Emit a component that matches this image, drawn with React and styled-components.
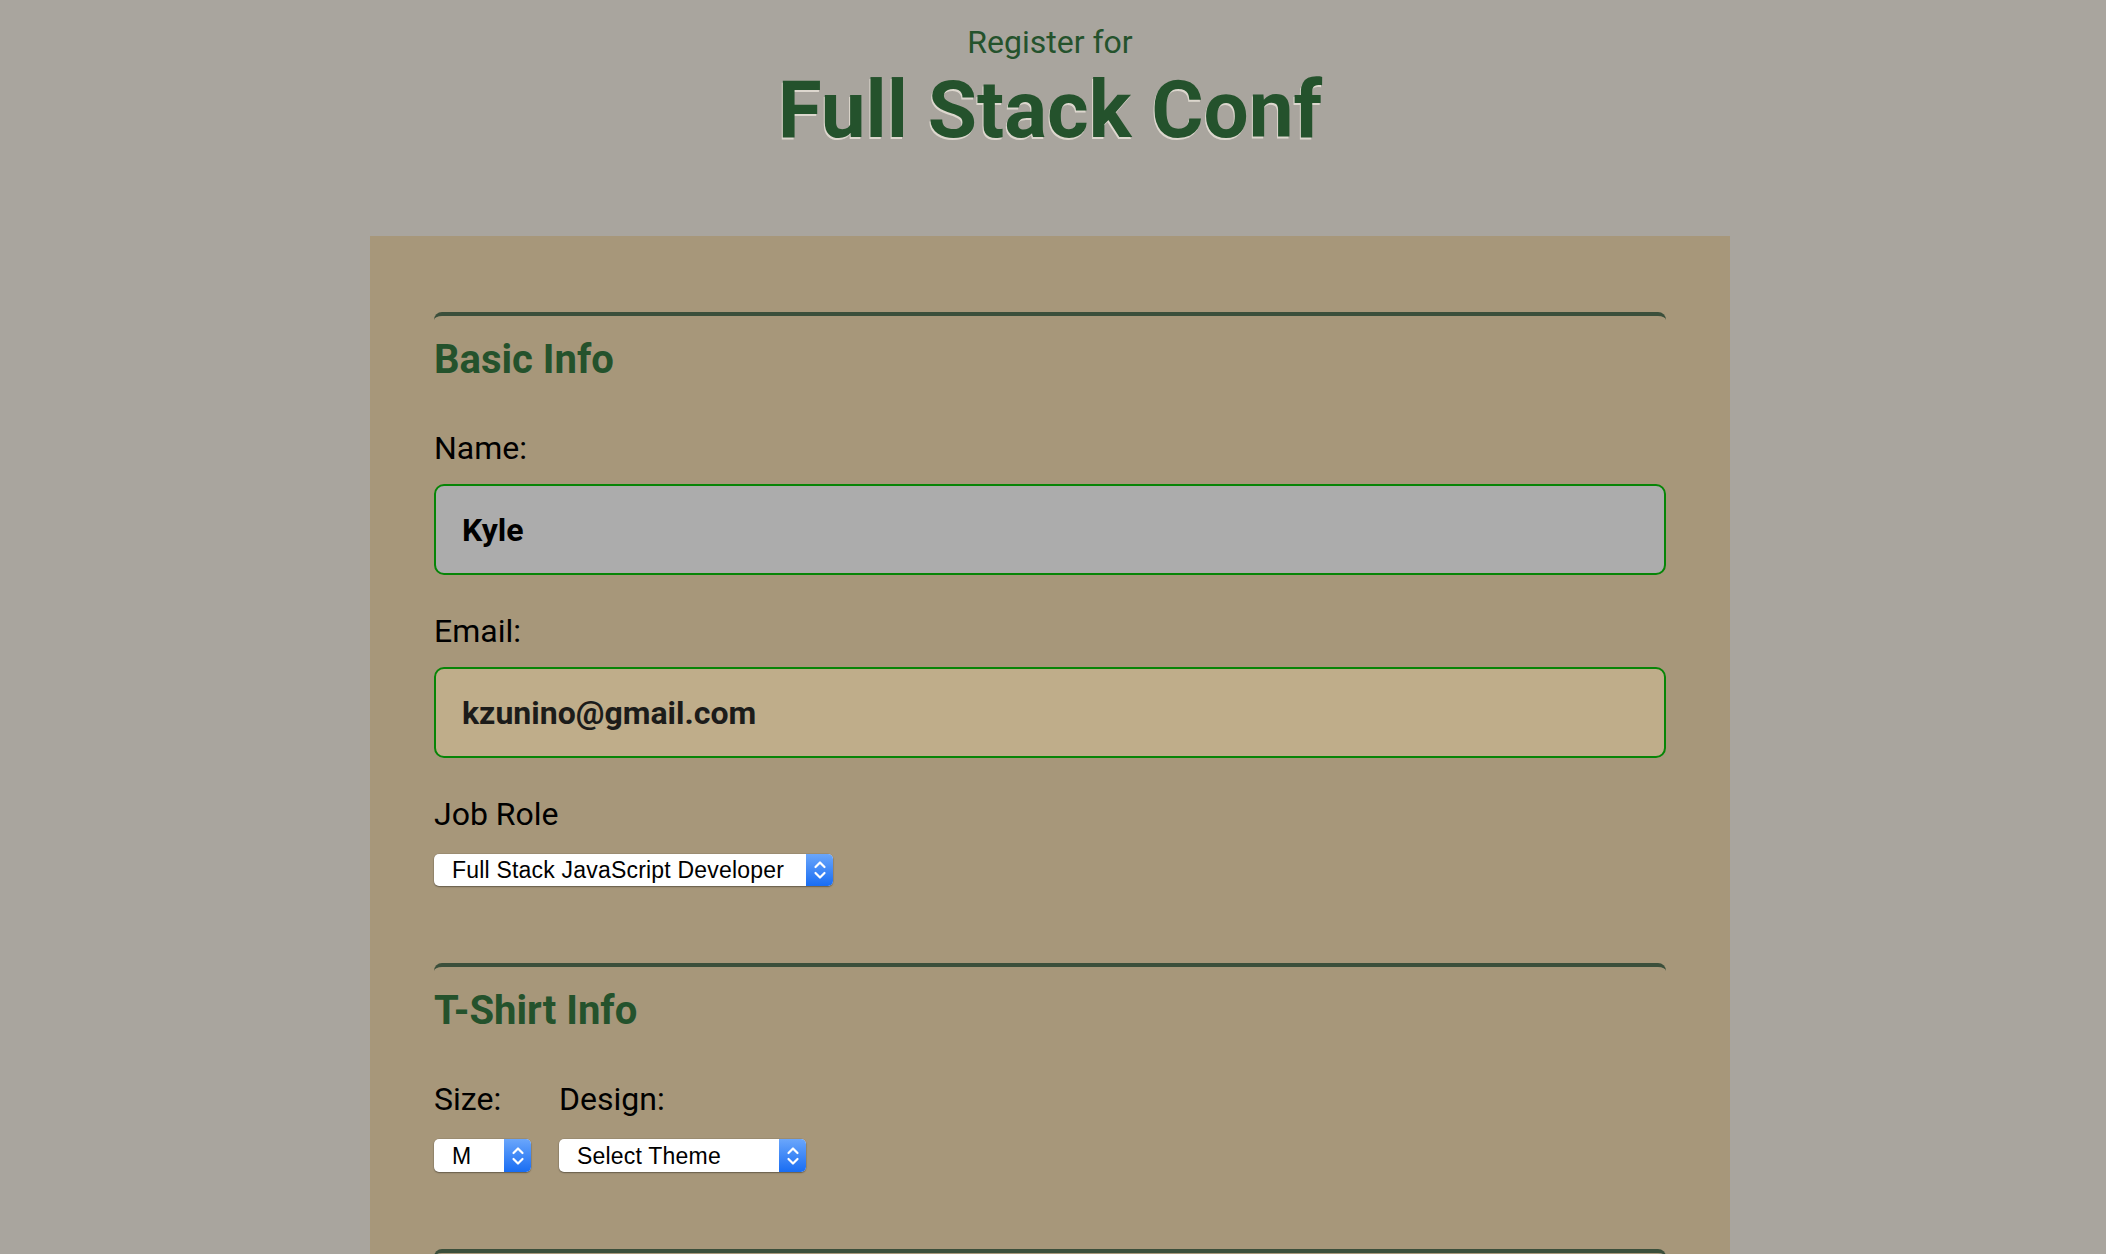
import React from "react";
import styled, { createGlobalStyle } from "styled-components";

const GlobalStyle = createGlobalStyle`
  html, body {
    margin: 0;
    background: #a9a59e;
  }
  body {
    font-family: Roboto, "Noto Sans", sans-serif;
  }
`;

const Page = styled.div`
  padding-right: 6px;
  min-height: 100vh;
  overflow: hidden;
`;

const Header = styled.header`
  text-align: center;
  padding-top: 22px;
  color: #24522c;
`;

const Kicker = styled.p`
  margin: 0;
  font-size: 32px;
  line-height: 40px;
  font-weight: 400;
`;

const Title = styled.h1`
  margin: 0;
  font-size: 80px;
  line-height: 96px;
  font-weight: 700;
  text-shadow: -1px 2px 0 rgba(226, 221, 211, 0.9);
`;

const Panel = styled.form`
  width: 1360px;
  box-sizing: border-box;
  margin: 78px auto 0;
  padding: 76px 64px 0;
  background: #a7977a;
`;

const Section = styled.section`
  padding: 20px 0 77px;
  border-top: 4px solid #3b4f3b;
  border-radius: 8px;
  min-height: ${(p) => p.$minHeight || 0}px;
`;

const SectionTitle = styled.h2`
  margin: 0 0 44px;
  font-size: 40px;
  line-height: 48px;
  font-weight: 700;
  color: #24522c;
`;

const Stack = styled.div`
  display: flex;
  flex-direction: column;
  gap: 36px;
`;

const Field = styled.div`
  display: flex;
  flex-direction: column;
  align-items: flex-start;
  gap: ${(p) => p.$gap || 16}px;
`;

const Row = styled.div`
  display: flex;
  align-items: flex-start;
  gap: 28px;
`;

const Label = styled.label`
  font-size: 32px;
  line-height: 40px;
  color: #000;
`;

const TextInput = styled.input`
  width: 100%;
  height: 91px;
  box-sizing: border-box;
  margin: 0;
  border: 2px solid #078507;
  border-radius: 10px;
  padding: 0 26px;
  font-family: Roboto, sans-serif;
  font-size: 32px;
  font-weight: 700;
  background: ${(p) => p.$bg};
  color: ${(p) => p.$color || "#000"};
  outline: none;
`;

const SelectWrap = styled.span`
  position: relative;
  display: inline-flex;
  width: ${(p) => p.$w}px;
  height: ${(p) => p.$h}px;
`;

const NativeSelect = styled.select`
  appearance: none;
  -webkit-appearance: none;
  width: 100%;
  height: 100%;
  margin: 0;
  border: 0;
  border-radius: 5px;
  background: #fff;
  box-shadow: 0 1px 1.5px rgba(0, 0, 0, 0.35), 0 0 0 0.5px rgba(0, 0, 0, 0.12);
  padding: 0 36px 0 18px;
  font-family: "Liberation Sans", Arial, sans-serif;
  font-size: 23px;
  letter-spacing: 0.2px;
  color: #000;
  outline: none;
`;

const Stepper = styled.span`
  position: absolute;
  top: 0;
  right: 0;
  bottom: 0;
  width: 27px;
  border-radius: 0 5px 5px 0;
  background: linear-gradient(#6aa6fb, #196df3);
  display: flex;
  align-items: center;
  justify-content: center;
  pointer-events: none;
`;

const Chevrons = () => (
  <svg width="14" height="26" viewBox="0 0 14 26" fill="none">
    <path d="M2.5 10 L7 5.5 L11.5 10" stroke="#fff" strokeWidth="2.2" strokeLinecap="round" strokeLinejoin="round" />
    <path d="M2.5 16 L7 20.5 L11.5 16" stroke="#fff" strokeWidth="2.2" strokeLinecap="round" strokeLinejoin="round" />
  </svg>
);

const Select = ({ id, w, h, options }) => (
  <SelectWrap $w={w} $h={h}>
    <NativeSelect id={id} defaultValue={options[0]}>
      {options.map((o) => (
        <option key={o}>{o}</option>
      ))}
    </NativeSelect>
    <Stepper>
      <Chevrons />
    </Stepper>
  </SelectWrap>
);

export default function App() {
  return (
    <Page>
      <GlobalStyle />
      <Header>
        <Kicker>Register for</Kicker>
        <Title>Full Stack Conf</Title>
      </Header>
      <Panel>
        <Section>
          <SectionTitle>Basic Info</SectionTitle>
          <Stack>
            <Field>
              <Label htmlFor="name">Name:</Label>
              <TextInput id="name" defaultValue="Kyle" $bg="#acacac" />
            </Field>
            <Field>
              <Label htmlFor="mail">Email:</Label>
              <TextInput id="mail" defaultValue="kzunino@gmail.com" $bg="#bfad8a" $color="#1c1c1a" />
            </Field>
            <Field $gap={20}>
              <Label htmlFor="title">Job Role</Label>
              <Select
                id="title"
                w={399}
                h={32}
                options={["Full Stack JavaScript Developer", "Front End Developer", "Back End Developer", "Designer", "Student", "Other"]}
              />
            </Field>
          </Stack>
        </Section>
        <Section>
          <SectionTitle>T-Shirt Info</SectionTitle>
          <Row>
            <Field $gap={20}>
              <Label htmlFor="size">Size:</Label>
              <Select id="size" w={97} h={33} options={["M", "S", "L", "XL"]} />
            </Field>
            <Field $gap={20}>
              <Label htmlFor="design">Design:</Label>
              <Select id="design" w={247} h={33} options={["Select Theme", "Theme - JS Puns", "Theme - I ♥ JS"]} />
            </Field>
          </Row>
        </Section>
        <Section $minHeight={200} />
      </Panel>
    </Page>
  );
}
